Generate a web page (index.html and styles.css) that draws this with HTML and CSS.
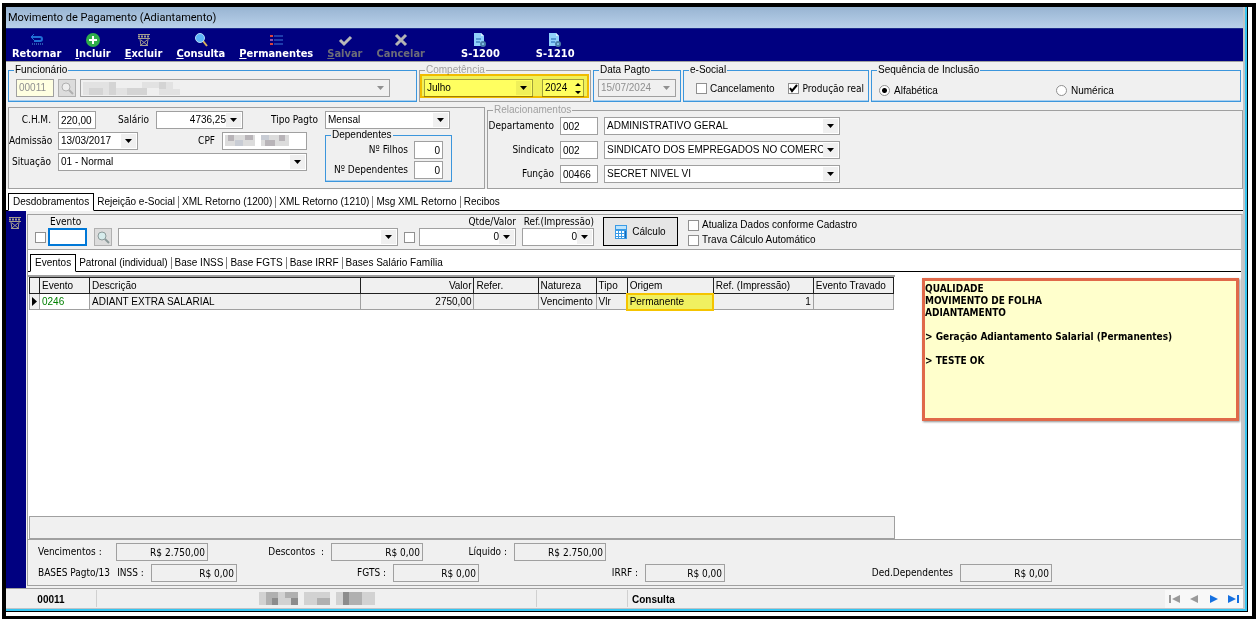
FILE: index.html
```html
<!DOCTYPE html>
<html lang="pt-BR">
<head>
  <meta charset="UTF-8">
  <title>Movimento de Pagamento (Adiantamento)</title>
  <link rel="stylesheet" href="styles.css">
</head>
<body>
  <div class="frame">
    <div class="window">
      <h1 class="titlebar">Movimento de Pagamento (Adiantamento)</h1>

      <div class="toolbar">
        <button class="tool">
          <svg width="16" height="14" viewBox="0 0 16 14" fill="none" stroke="#1f6fd6" stroke-width="2"><path d="M2 4h9q2 0 2 2t-2 2H5"/><path d="M5 1L2 4l3 3" stroke-width="1"/><path d="M3 11h11" stroke="#2a56b0" stroke-dasharray="1 1"/></svg>
          <span>Retornar</span>
        </button>
        <button class="tool">
          <svg width="16" height="14" viewBox="0 0 16 14"><circle cx="8" cy="7" r="7" fill="#2fae4a"/><path d="M8 3v8M4 7h8" stroke="#fff" stroke-width="2"/></svg>
          <span><u>I</u>ncluir</span>
        </button>
        <button class="tool">
          <svg width="16" height="14" viewBox="0 0 16 14" fill="none" stroke="#a39d90"><path d="M2 1.500h12M2 5.500h12M4 6l1 7M12 6l-1 7M5 7l6 5M11 7l-6 5M4 12.500h8"/><path d="M2 3.500h12" stroke-width="2" stroke-dasharray="2 1"/></svg>
          <span><u>E</u>xcluir</span>
        </button>
        <button class="tool">
          <svg width="16" height="14" viewBox="0 0 16 14"><path d="M10 8l4 5" stroke="#d8b25a" stroke-width="2"/><circle cx="7" cy="5" r="4.500" fill="#5db4f7" stroke="#b7dcf8"/></svg>
          <span><u>C</u>onsulta</span>
        </button>
        <button class="tool">
          <svg width="16" height="14" viewBox="0 0 16 14"><path d="M2 3h3M2 11h3" stroke="#d8433c" stroke-width="2"/><path d="M2 7h3" stroke="#8a4fb0" stroke-width="2"/><path d="M6 3h9M6 7h9M6 11h9" stroke="#3d78d8"/></svg>
          <span><u>P</u>ermanentes</span>
        </button>
        <button class="tool" disabled>
          <svg width="16" height="14" viewBox="0 0 16 14"><path d="M3 7l4 4 7-7" fill="none" stroke="#b9b9b9" stroke-width="3"/></svg>
          <span><u>S</u>alvar</span>
        </button>
        <button class="tool" disabled>
          <svg width="16" height="14" viewBox="0 0 16 14"><path d="M3 2l10 10M13 2L3 12" stroke="#b4b4b4" stroke-width="3"/></svg>
          <span>Cancelar</span>
        </button>
        <button class="tool tool-report">
          <svg width="16" height="14" viewBox="0 0 16 14"><path d="M2 0h7l3 3v10H2z" fill="#8fd0fb"/><path d="M9 0v3h3" fill="#d8effd"/><path d="M4 6h5M4 9h4" stroke="#1b5fae"/><circle cx="11" cy="11" r="2" fill="none" stroke="#4a7fa8" stroke-width="2"/></svg>
          <span>S-1200</span>
        </button>
        <button class="tool tool-report">
          <svg width="16" height="14" viewBox="0 0 16 14"><path d="M2 0h7l3 3v10H2z" fill="#8fd0fb"/><path d="M9 0v3h3" fill="#d8effd"/><path d="M4 6h5M4 9h4" stroke="#1b5fae"/><circle cx="11" cy="11" r="2" fill="none" stroke="#4a7fa8" stroke-width="2"/></svg>
          <span>S-1210</span>
        </button>
      </div>

      <div class="form">
        <div class="groups">
          <fieldset class="group group-employee">
            <legend>Funcionário</legend>
            <div class="line">
              <input class="w-code cream" type="text" value="00011" aria-label="Código" disabled>
              <button class="search" aria-label="Pesquisar funcionário" disabled>
                <svg width="14" height="14" viewBox="0 0 14 14" fill="#eee" stroke="#b0b0b0"><circle cx="6" cy="6" r="4"/><path d="M9 9l4 4" stroke-width="2"/></svg>
              </button>
              <div class="masked-field">
                <select aria-label="Nome" disabled><option></option></select>
                <svg class="mask" width="97" height="13" viewBox="0 0 97 13"><path fill="#e2e2e2" d="M0 0h97v13H0z"/><path fill="#d4d4d4" d="M6 6h14v7H6zM26 0h7v13h-7zM44 6h20v7H44zM76 0h7v7h-7z"/><path fill="#efefef" d="M33 0h6v6h-6zM39 0h20v6H39zM64 6h12v7H64zM90 0h7v7h-7z"/></svg>
              </div>
            </div>
          </fieldset>
          <fieldset class="group group-period muted">
            <legend>Competência</legend>
            <div class="line">
              <select class="w-month" aria-label="Mês"><option>Julho</option></select>
              <div class="spin">
                <input type="text" value="2024" aria-label="Ano">
                <svg width="9" height="14" viewBox="0 0 9 14"><path d="M1 5l3-3 3 3zM1 10l3 3 3-3z"/></svg>
              </div>
            </div>
            <div class="marker"></div>
          </fieldset>
          <fieldset class="group group-date">
            <legend>Data Pagto</legend>
            <div class="line">
              <select class="w-date" aria-label="Data Pagto" disabled><option>15/07/2024</option></select>
            </div>
          </fieldset>
          <fieldset class="group group-esocial">
            <legend>e-Social</legend>
            <div class="line">
              <label><input type="checkbox">Cancelamento</label>
              <label class="tahoma"><input type="checkbox" checked>Produção real</label>
            </div>
          </fieldset>
          <fieldset class="group group-order">
            <legend>Sequência de Inclusão</legend>
            <div class="line">
              <label><input type="radio" name="ordem" checked>Alfabética</label>
              <label><input type="radio" name="ordem">Numérica</label>
            </div>
          </fieldset>
        </div>

        <div class="details">
          <div class="person">
            <div class="row">
              <label class="caption first" for="chm">C.H.M.</label>
              <input class="w-code" id="chm" type="text" value="220,00">
              <label class="caption grow" for="salario">Salário</label>
              <select class="w-salary right" id="salario"><option>4736,25</option></select>
              <label class="caption caption-type" for="tipo">Tipo Pagto</label>
              <select class="w-type" id="tipo"><option>Mensal</option></select>
            </div>
            <div class="person-lower">
              <div class="rows">
                <div class="row">
                  <label class="caption first" for="admissao">Admissão</label>
                  <select class="w-date" id="admissao"><option>13/03/2017</option></select>
                  <label class="caption grow" for="cpf">CPF</label>
                  <div class="masked-field w-cpf">
                    <input id="cpf" type="text" value="0">
                    <svg class="mask" width="64" height="11" viewBox="0 0 64 11"><path fill="#dcdcdc" d="M0 0h30v11H0zM36 0h28v11H36z"/><path fill="#b8b4b8" d="M3 0h6v6H3zM20 0h8v5h-8zM40 5h10v6H40zM54 0h6v6h-6z"/><path fill="#c8ccd4" d="M10 5h8v6h-8zM36 0h8v5h-8z"/></svg>
                  </div>
                </div>
                <div class="row">
                  <label class="caption first" for="situacao">Situação</label>
                  <select class="grow" id="situacao"><option>01 - Normal</option></select>
                </div>
              </div>
              <fieldset class="group dependents">
                <legend>Dependentes</legend>
                <div class="row">
                  <label class="caption grow" for="filhos">Nº Filhos</label>
                  <input class="w-count right" id="filhos" type="text" value="0">
                </div>
                <div class="row">
                  <label class="caption grow" for="deps">Nº Dependentes</label>
                  <input class="w-count right" id="deps" type="text" value="0">
                </div>
              </fieldset>
            </div>
          </div>
          <fieldset class="group muted relations">
            <legend>Relacionamentos</legend>
            <div class="row">
              <label class="caption" for="depto">Departamento</label>
              <input class="w-code" id="depto" type="text" value="002">
              <select class="w-name" aria-label="Nome do departamento"><option>ADMINISTRATIVO GERAL</option></select>
            </div>
            <div class="row">
              <label class="caption" for="sindicato">Sindicato</label>
              <input class="w-code" id="sindicato" type="text" value="002">
              <select class="w-name" aria-label="Nome do sindicato"><option>SINDICATO DOS EMPREGADOS NO COMERCIO</option></select>
            </div>
            <div class="row">
              <label class="caption" for="funcao">Função</label>
              <input class="w-code" id="funcao" type="text" value="00466">
              <select class="w-name" aria-label="Nome da função"><option>SECRET NIVEL VI</option></select>
            </div>
          </fieldset>
        </div>
      </div>

      <div class="tabs">
        <button class="tab active">Desdobramentos</button>
        <button class="tab">Rejeição e-Social</button>
        <button class="tab">XML Retorno (1200)</button>
        <button class="tab">XML Retorno (1210)</button>
        <button class="tab">Msg XML Retorno</button>
        <button class="tab">Recibos</button>
      </div>

      <div class="main">
        <div class="sidebar">
          <button class="side-button" aria-label="Excluir evento">
            <svg width="16" height="14" viewBox="0 0 16 14" fill="none" stroke="#a39d90"><path d="M2 1.500h12M2 5.500h12M4 6l1 7M12 6l-1 7M5 7l6 5M11 7l-6 5M4 12.500h8"/><path d="M2 3.500h12" stroke-width="2" stroke-dasharray="2 1"/></svg>
          </button>
        </div>
        <div class="content">
          <div class="entry">
            <input type="checkbox" aria-label="Fixar evento">
            <div class="field entry-code">
              <label for="evento">Evento</label>
              <input id="evento" type="text">
            </div>
            <button class="search" aria-label="Pesquisar evento">
              <svg width="14" height="14" viewBox="0 0 14 14" fill="#d6ecec" stroke="#8c9a9a"><circle cx="6" cy="6" r="4"/><path d="M9 9l4 4" stroke-width="2"/></svg>
            </button>
            <select class="w-event" aria-label="Descrição do evento"><option></option></select>
            <input type="checkbox" aria-label="Fixar valor">
            <div class="field entry-qty">
              <label for="qtde">Qtde/Valor</label>
              <select class="right" id="qtde"><option>0</option></select>
            </div>
            <div class="field entry-ref">
              <label for="ref">Ref.(Impressão)</label>
              <select class="right" id="ref"><option>0</option></select>
            </div>
            <button class="calc">
              <svg width="12" height="16" viewBox="0 0 12 16"><path fill="#3a9be6" d="M0 1h12v14H0z"/><path fill="#bfe4fb" d="M1 2h10v3H1z"/><path fill="#fff" d="M1 7h2v2H1zM4 7h2v2H4zM7 7h2v2H7zM1 10h2v2H1zM4 10h2v2H4zM7 10h2v2H7zM1 13h2v1H1zM4 13h2v1H4zM7 13h2v1H7z"/><path fill="#1767b5" d="M10 7h1v7h-1z"/></svg>
              <span>Cálculo</span>
            </button>
            <div class="options">
              <label><input type="checkbox">Atualiza Dados conforme Cadastro</label>
              <label><input type="checkbox">Trava Cálculo Automático</label>
            </div>
          </div>

          <div class="tabs subtabs">
            <button class="tab active">Eventos</button>
            <button class="tab">Patronal (individual)</button>
            <button class="tab">Base INSS</button>
            <button class="tab">Base FGTS</button>
            <button class="tab">Base IRRF</button>
            <button class="tab">Bases Salário Família</button>
          </div>

          <div class="sheet">
            <div class="grid">
              <table>
                <colgroup>
                  <col class="c-mark"><col class="c-event"><col class="c-desc"><col class="c-value"><col class="c-refer">
                  <col class="c-nature"><col class="c-type"><col class="c-origin"><col class="c-print"><col class="c-lock">
                </colgroup>
                <thead>
                  <tr>
                    <th></th><th>Evento</th><th>Descrição</th><th class="right">Valor</th><th>Refer.</th>
                    <th>Natureza</th><th>Tipo</th><th>Origem</th><th>Ref. (Impressão)</th><th>Evento Travado</th>
                  </tr>
                </thead>
                <tbody>
                  <tr>
                    <td class="mark"><svg width="5" height="9" viewBox="0 0 5 9"><path d="M0 0l5 4.500L0 9z"/></svg></td>
                    <td class="code">0246</td>
                    <td>ADIANT EXTRA SALARIAL</td>
                    <td class="right">2750,00</td>
                    <td></td>
                    <td>Vencimento</td>
                    <td>Vlr</td>
                    <td class="marked">Permanente</td>
                    <td class="right">1</td>
                    <td></td>
                  </tr>
                </tbody>
              </table>
              <div class="grid-footer"></div>
            </div>
            <div class="note">
              <p>QUALIDADE<br>MOVIMENTO DE FOLHA<br>ADIANTAMENTO</p>
              <p>&gt; Geração Adiantamento Salarial (Permanentes)</p>
              <p>&gt; TESTE OK</p>
            </div>
          </div>

          <div class="totals">
            <div class="totals-row">
              <div class="total"><label for="venc">Vencimentos :</label><input class="w-total" id="venc" type="text" value="R$ 2.750,00" readonly></div>
              <div class="total"><label for="desc">Descontos &nbsp;:</label><input class="w-total" id="desc" type="text" value="R$ 0,00" readonly></div>
              <div class="total"><label for="liq">Líquido :</label><input class="w-total" id="liq" type="text" value="R$ 2.750,00" readonly></div>
            </div>
            <div class="totals-row bases">
              <div class="total"><span>BASES Pagto/13</span><label for="inss">INSS :</label><input class="w-base" id="inss" type="text" value="R$ 0,00" readonly></div>
              <div class="total"><label for="fgts">FGTS :</label><input class="w-base" id="fgts" type="text" value="R$ 0,00" readonly></div>
              <div class="total"><label for="irrf">IRRF :</label><input class="w-irrf" id="irrf" type="text" value="R$ 0,00" readonly></div>
              <div class="total"><label for="ded">Ded.Dependentes</label><input class="w-total" id="ded" type="text" value="R$ 0,00" readonly></div>
            </div>
          </div>
        </div>
      </div>

      <div class="statusbar">
        <div class="status status-code">00011</div>
        <div class="status status-name">
          <svg width="116" height="13" viewBox="0 0 116 13"><path fill="#d2d2d2" d="M0 0h39v13H0zM45 0h26v13H45zM77 0h39v13H77z"/><path fill="#b0b0b0" d="M7 0h12v13H7zM26 0h13v6H26zM58 6h13v7H58zM90 0h13v13H90z"/><path fill="#8c8c8c" d="M13 6h6v7h-6zM32 6h7v7h-7zM84 0h6v13h-6z"/></svg>
        </div>
        <div class="status status-gap"></div>
        <div class="status status-mode">Consulta</div>
        <div class="navigator">
          <button aria-label="Primeiro" disabled><svg width="12" height="8" viewBox="0 0 12 8" fill="#9a9a9a"><path d="M0 0h2v8H0zM11 0v8L3 4z"/></svg></button>
          <button aria-label="Anterior" disabled><svg width="12" height="8" viewBox="0 0 12 8" fill="#9a9a9a"><path d="M10 0v8L2 4z"/></svg></button>
          <button aria-label="Próximo"><svg width="12" height="8" viewBox="0 0 12 8" fill="#1670e0"><path d="M2 0l8 4-8 4z"/></svg></button>
          <button aria-label="Último"><svg width="12" height="8" viewBox="0 0 12 8" fill="#1670e0"><path d="M1 0l8 4-8 4zM10 0h2v8h-2z"/></svg></button>
        </div>
      </div>
    </div>
  </div>
</body>
</html>
```
FILE: styles.css
```css
* {
  box-sizing: border-box;
}
body {
  margin: 0;
  padding: 3px 0 2px 2px;
  background: #fff;
  color: #000;
  font: 10px/12px "Liberation Sans", Arial, sans-serif;
}
button, input, select {
  margin: 0;
  font: inherit;
  color: inherit;
}
svg {
  display: block;
}
.frame {
  display: flex;
  min-height: calc(100vh - 5px);
  padding: 0 4px 4px 0;
  border: 4px solid #000;
  border-bottom-width: 3px;
}
.window {
  flex: 1;
  display: flex;
  flex-direction: column;
  background: #f0f0f0;
  border-right: 1px solid #000;
  border-bottom: 1px solid #000;
  box-shadow: inset -2px -2px #35c5f0, inset -4px -3px #c0c4c8;
  padding: 0 4px 3px 0;
}

/* title and toolbar */
.titlebar {
  margin: 0;
  padding: 1px 2px;
  height: 21px;
  background: linear-gradient(#98b4d2, #b9d1ea);
  font: 11px/20px Roboto, sans-serif;
}
.toolbar {
  display: flex;
  gap: 14px;
  height: 33px;
  padding: 4px 6px 0;
  background: #000080;
  border-top: 1px solid #1c2c8c;
}
.tool {
  display: flex;
  flex-direction: column;
  align-items: center;
  padding: 0;
  border: 0;
  background: none;
  color: #fff;
  font: bold 11px/13px "DejaVu Sans Condensed", "DejaVu Sans", sans-serif;
}
.tool:disabled {
  color: #6c6c78;
}
.tool-report {
  margin-left: 22px;
}

/* form */
.form {
  padding: 2px 0 0 2px;
  border-top: 1px solid #a0a0a0;
}
.groups {
  display: flex;
  gap: 2px;
}
.group {
  position: relative;
  min-width: 0;
  margin: 0;
  padding: 0;
  border: 1px solid #3c96dc;
  box-shadow: inset 0 -1px #a8d0f0;
}
.group legend {
  margin-left: 5px;
  padding: 0 1px;
}
.muted {
  border-color: #a0a0a0;
  box-shadow: none;
}
.muted legend {
  color: #a0a0a0;
}
.group-employee { flex: 0 0 409px; }
.group-period { flex: 0 0 172px; }
.group-date { flex: 0 0 88px; }
.group-esocial { flex: 0 0 186px; }
.group-order { flex: 1; margin-right: 2px; }
.line {
  display: flex;
  align-items: center;
  height: 25px;
  padding: 0 7px 2px;
}
.group-employee .line { gap: 4px; }
.group-period .line { gap: 9px; padding: 0 4px 2px; }
.group-date .line { padding: 0 4px 2px; }
.group-esocial .line { gap: 14px; padding: 0 12px; }
.group-order .line { padding: 4px 7px 0; }
.group-order label { flex: 0 1 182px; }

input[type="text"], select {
  height: 18px;
  padding: 0 2px;
  border: 1px solid #a0a0a0;
  border-radius: 0;
  background: #fff;
  outline: none;
  min-width: 0;
}
select {
  appearance: none;
  padding-right: 16px;
  background: #fff url("data:image/svg+xml,%3Csvg xmlns='http://www.w3.org/2000/svg' width='15' height='14'%3E%3Cpath fill='%23f0f0f0' d='M0 0h15v14H0z'/%3E%3Cpath d='M4 5h7L7.500 9z'/%3E%3C/svg%3E") no-repeat right 1px center;
}
input:disabled, select:disabled {
  color: #909090;
  opacity: 1;
}
select:disabled {
  background: #f0f0f0 url("data:image/svg+xml,%3Csvg xmlns='http://www.w3.org/2000/svg' width='15' height='14'%3E%3Cpath fill='%23909090' d='M4 5h7L7.500 9z'/%3E%3C/svg%3E") no-repeat right 1px center;
}
input.cream {
  background: #ffffe1;
}
.right {
  text-align: right;
  text-align-last: right;
}
input[type="checkbox"], input[type="radio"] {
  appearance: none;
  flex: none;
  width: 11px;
  height: 11px;
  border: 1px solid #909090;
  background: #fff;
}
input[type="radio"] {
  border-radius: 50%;
}
input[type="radio"]:checked {
  background: radial-gradient(#000 2px, #fff 3px);
}
input[type="checkbox"]:checked {
  background: #fff url("data:image/svg+xml,%3Csvg xmlns='http://www.w3.org/2000/svg' width='9' height='9'%3E%3Cpath d='M1 4l2 3 5-6' fill='none' stroke='%23000' stroke-width='2'/%3E%3C/svg%3E") no-repeat center;
}
.line label, .options label {
  display: flex;
  align-items: center;
  gap: 3px;
  white-space: nowrap;
}
.group-order label {
  gap: 4px;
}
.search {
  display: flex;
  align-items: center;
  justify-content: center;
  width: 18px;
  height: 18px;
  padding: 0;
  border: 1px solid #b0b0b0;
  background: #dcdcdc;
}
.masked-field {
  position: relative;
  display: flex;
  flex: none;
}
.masked-field select {
  width: 310px;
}
.masked-field .mask {
  position: absolute;
  left: 3px;
  top: 3px;
}
.spin {
  display: flex;
  align-items: center;
  width: 42px;
  height: 18px;
  border: 1px solid #a0a0a0;
  background: #fff;
}
.spin input[type="text"] {
  flex: 1;
  height: 16px;
  border: 0;
}
.marker {
  position: absolute;
  inset: -2px 1px 3px 0;
  border: 2px solid #ffc800;
  background: #ffff60;
  mix-blend-mode: multiply;
}

.w-code { width: 38px; }
.w-month { width: 109px; }
.w-date { width: 80px; }
.w-salary { width: 87px; }
.w-cpf, .w-cpf input { width: 85px; }
.w-type { width: 125px; }
.w-count { width: 29px; }
.w-name { width: 236px; }
.w-event { width: 280px; }
.w-total { width: 92px; }
.w-base { width: 86px; }
.w-irrf { width: 80px; }
.grow { flex: 1; }

.details {
  display: flex;
  gap: 2px;
  align-items: flex-end;
  margin-top: 2px;
}
.person {
  flex: 0 0 477px;
  height: 82px;
  padding: 3px 0;
  border: 1px solid #a0a0a0;
}
.person > .row {
  width: 441px;
}
.person-lower {
  display: flex;
}
.rows {
  display: flex;
  flex-direction: column;
  gap: 3px;
  width: 298px;
  padding-top: 3px;
}
.row {
  display: flex;
  align-items: center;
  gap: 7px;
}
.caption, .tahoma, .field label, .totals {
  font: 10px/12px "DejaVu Sans Condensed", "DejaVu Sans", sans-serif;
}
.caption {
  text-align: right;
  white-space: nowrap;
}
.caption.first {
  width: 42px;
}
.caption-type {
  width: 68px;
}
.dependents {
  width: 127px;
  margin-left: 18px;
}
.dependents .row {
  gap: 6px;
  padding: 0 8px 2px 0;
}
.relations {
  flex: 1;
  padding-bottom: 5px;
}
.relations .row {
  gap: 6px;
  padding-top: 1px;
}
.relations .row + .row {
  padding-top: 6px;
}
.relations .caption {
  width: 66px;
}

/* tabs */
.tabs {
  display: flex;
  align-items: flex-end;
  height: 22px;
  padding-left: 2px;
  background: #fff;
  border-bottom: 1px solid #000;
}
.tab {
  position: relative;
  height: 12px;
  margin-bottom: 2px;
  padding: 0 3px;
  border: 0;
  border-right: 1px solid #808080;
  background: none;
  white-space: nowrap;
}
.tab:last-child {
  border-right: 0;
}
.tab.active {
  height: 18px;
  margin-bottom: -1px;
  padding: 0 4px;
  border: 1px solid #000;
  border-bottom-color: #fff;
}

/* lower area */
.main {
  flex: 1;
  display: flex;
  background: #f0f0f0;
}
.sidebar {
  width: 20px;
  background: #000080;
}
.side-button {
  margin: 5px 0 0 1px;
  padding: 0;
  border: 0;
  background: none;
}
.content {
  flex: 1;
  display: flex;
  flex-direction: column;
  margin: 3px 0 2px 1px;
  border: 1px solid #a0a0a0;
  border-right: 2px solid #c8c8c8;
}
.entry {
  display: flex;
  align-items: flex-end;
  height: 35px;
  padding: 0 7px 3px;
  border-bottom: 1px solid #a0a0a0;
}
.entry > input[type="checkbox"] {
  margin-bottom: 3px;
}
.field {
  display: flex;
  flex-direction: column;
}
.entry-code {
  width: 39px;
  margin: 0 7px 0 2px;
}
.entry-code label {
  padding-left: 2px;
}
.entry-code input[type="text"] {
  border: 2px solid #0078d7;
}
.entry .w-event {
  margin: 0 6px;
}
.entry-qty {
  width: 97px;
  margin: 0 6px 0 4px;
}
.entry-ref {
  width: 72px;
}
.entry-qty label, .entry-ref label {
  align-self: flex-end;
  white-space: nowrap;
}
.calc {
  display: flex;
  align-items: center;
  justify-content: center;
  gap: 5px;
  width: 75px;
  height: 29px;
  margin: 0 10px 0 9px;
  border: 1px solid #000;
  background: #e6e6e6;
}
.options {
  display: flex;
  flex-direction: column;
  gap: 3px;
}
.subtabs {
  height: 22px;
}
.sheet {
  flex: 1;
  display: flex;
  padding-top: 3px;
  background: #fff;
  border-bottom: 1px solid #a0a0a0;
}
.grid {
  display: flex;
  flex-direction: column;
  width: 867px;
  border-top: 2px solid #a0a0a0;
}
table {
  width: 865px;
  margin-left: 1px;
  table-layout: fixed;
  border-collapse: collapse;
}
th, td {
  height: 16px;
  padding: 0 2px;
  border: 1px solid #a0a0a0;
  background: #f0f0f0;
  font-weight: normal;
  text-align: left;
  white-space: nowrap;
}
th {
  border-color: #202020;
}
th.right, td.right {
  text-align: right;
  text-align-last: right;
}
.c-mark { width: 10px; }
.c-event { width: 50px; }
.c-desc { width: 271px; }
.c-value { width: 113px; }
.c-refer { width: 64px; }
.c-nature { width: 58px; }
.c-type { width: 31px; }
.c-origin { width: 86px; }
.c-print { width: 100px; }
.c-lock { width: 80px; }
.code {
  background: #fff;
  color: #008000;
}
.marked {
  background: #f0f060;
  outline: 2px solid #f5c400;
  outline-offset: -1px;
}
.grid-footer {
  height: 23px;
  margin: auto 0 0 1px;
  border: 1px solid #a0a0a0;
  background: #f0f0f0;
}
.note {
  flex: 1;
  align-self: flex-start;
  height: 143px;
  margin: 3px 2px 0 27px;
  padding: 2px 0;
  border: 3px solid #e0694a;
  background: #ffffcc;
  box-shadow: 1px 1px 2px #909090;
  font: bold 10px/12px "DejaVu Sans Condensed", "DejaVu Sans", sans-serif;
}
.note p {
  margin: 0 0 12px;
}

/* totals */
.totals {
  padding: 3px 0;
}
.totals-row {
  display: grid;
  grid-template-columns: 180px 215px 183px;
  margin-bottom: 3px;
}
.bases {
  grid-template-columns: 209px 242px 246px 327px;
  margin-bottom: 0;
}
.total {
  display: flex;
  align-items: center;
  justify-content: flex-end;
  gap: 7px;
}
.total:first-child {
  justify-content: space-between;
  padding-left: 10px;
}
.totals input[type="text"] {
  background: #f0f0f0;
  text-align: right;
}

/* status bar */
.statusbar {
  display: flex;
  align-items: center;
  height: 20px;
  border-top: 1px solid #a0a0a0;
  font-weight: bold;
}
.status {
  height: 17px;
  line-height: 19px;
  border-right: 1px solid #d0d0d0;
}
.status-code {
  width: 91px;
  text-align: center;
}
.status-name {
  display: flex;
  align-items: center;
  justify-content: center;
  width: 440px;
}
.status-gap {
  width: 91px;
}
.status-mode {
  flex: 1;
  padding-left: 4px;
  border-right: 0;
}
.navigator {
  display: flex;
  width: 78px;
  height: 18px;
  background: #f8f8f8;
}
.navigator button {
  flex: 1;
  display: flex;
  align-items: center;
  justify-content: center;
  padding: 0;
  border: 0;
  background: none;
}
```
